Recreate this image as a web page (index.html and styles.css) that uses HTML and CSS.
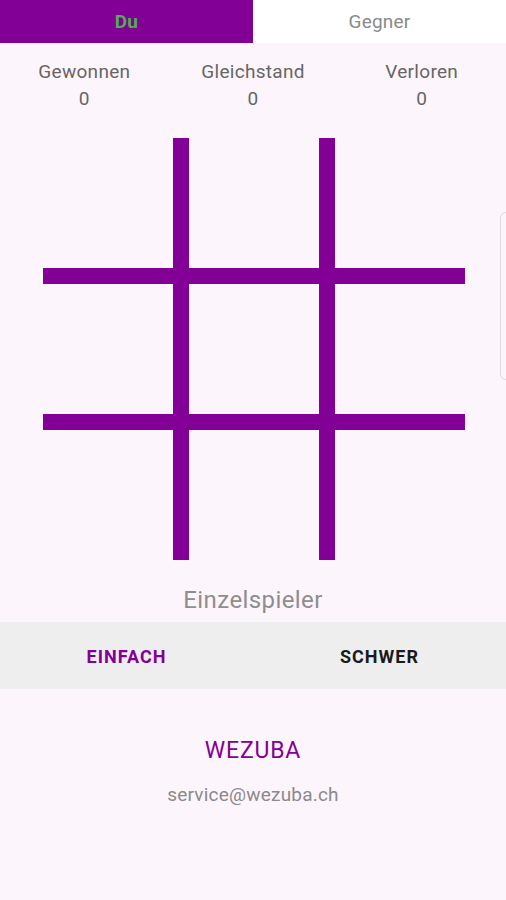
FILE: index.html
```html
<!DOCTYPE html>
<html>
<head>
<link rel="stylesheet" href="styles.css">
<meta charset="UTF-8">
<title>Tic Tac Toe</title>
</head>
<body>
<div class="tabs">
	<div class="tab tab_active">Du</div>
	<div class="tab">Gegner</div>
</div>
<div class="stats">
	<div class="stat"><span>Gewonnen</span><span>0</span></div>
	<div class="stat"><span>Gleichstand</span><span>0</span></div>
	<div class="stat"><span>Verloren</span><span>0</span></div>
</div>
<div class="board_wrap">
	<div class="board">
		<div class="cell"></div><div class="cell"></div><div class="cell"></div>
		<div class="cell"></div><div class="cell"></div><div class="cell"></div>
		<div class="cell"></div><div class="cell"></div><div class="cell"></div>
	</div>
</div>
<div class="mode">Einzelspieler</div>
<div class="levels">
	<div class="level level_active">EINFACH</div>
	<div class="level">SCHWER</div>
</div>
<div class="footer">
	<div class="brand">WEZUBA</div>
	<div class="mail">service@wezuba.ch</div>
</div>
<div class="edge_handle"></div>
</body>
</html>
```

FILE: styles.css
```css
body {
	margin: 0;
	background: #fcf5fc;
	font-family: Roboto, "Liberation Sans", sans-serif;
	width: 506px;
	height: 900px;
	overflow: hidden;
	position: relative;
}
.tabs {
	display: flex;
	height: 43px;
	background: #ffffff;
}
.tab {
	flex: 1;
	display: flex;
	align-items: center;
	justify-content: center;
	font-size: 19px;
	color: #8a8a8a;
	letter-spacing: 0.2px;
}
.tab_active {
	background: #820096;
	color: #4caf50;
	font-weight: bold;
}
.stats {
	display: flex;
	padding-top: 18px;
	height: 78px;
	box-sizing: border-box;
}
.stat {
	flex: 1;
	display: flex;
	flex-direction: column;
	align-items: center;
	font-size: 19px;
	color: #666666;
	line-height: 22px;
	gap: 5px;
	letter-spacing: 0.3px;
}
.board_wrap {
	display: flex;
	justify-content: center;
	padding-top: 17px;
}
.board {
	display: grid;
	grid-template-columns: 130px 130px 130px;
	grid-template-rows: 130px 130px 130px;
	gap: 16px;
	background: #820096;
	width: 422px;
	height: 422px;
	margin-left: 1px;
}
.cell {
	background: #fcf5fc;
}
.mode {
	text-align: center;
	font-size: 24px;
	color: #8e8e8e;
	padding-top: 26px;
	height: 36px;
	letter-spacing: 0.4px;
}
.levels {
	display: flex;
	height: 67px;
	background: #eeeeee;
}
.level {
	flex: 1;
	display: flex;
	align-items: center;
	justify-content: center;
	font-size: 18px;
	font-weight: bold;
	letter-spacing: 1px;
	color: #1a1a1a;
	padding-top: 2px;
}
.level_active {
	color: #820096;
}
.footer {
	display: flex;
	flex-direction: column;
	align-items: center;
	padding-top: 48px;
}
.brand {
	font-size: 23px;
	color: #820096;
	letter-spacing: 0.8px;
}
.mail {
	font-size: 19px;
	color: #8a8a8a;
	margin-top: 19px;
	letter-spacing: 0.2px;
}
.edge_handle {
	position: absolute;
	left: 500px;
	top: 212px;
	width: 12px;
	height: 168px;
	border: 1px solid #dcdcdc;
	border-radius: 6px;
	box-sizing: border-box;
}
```
